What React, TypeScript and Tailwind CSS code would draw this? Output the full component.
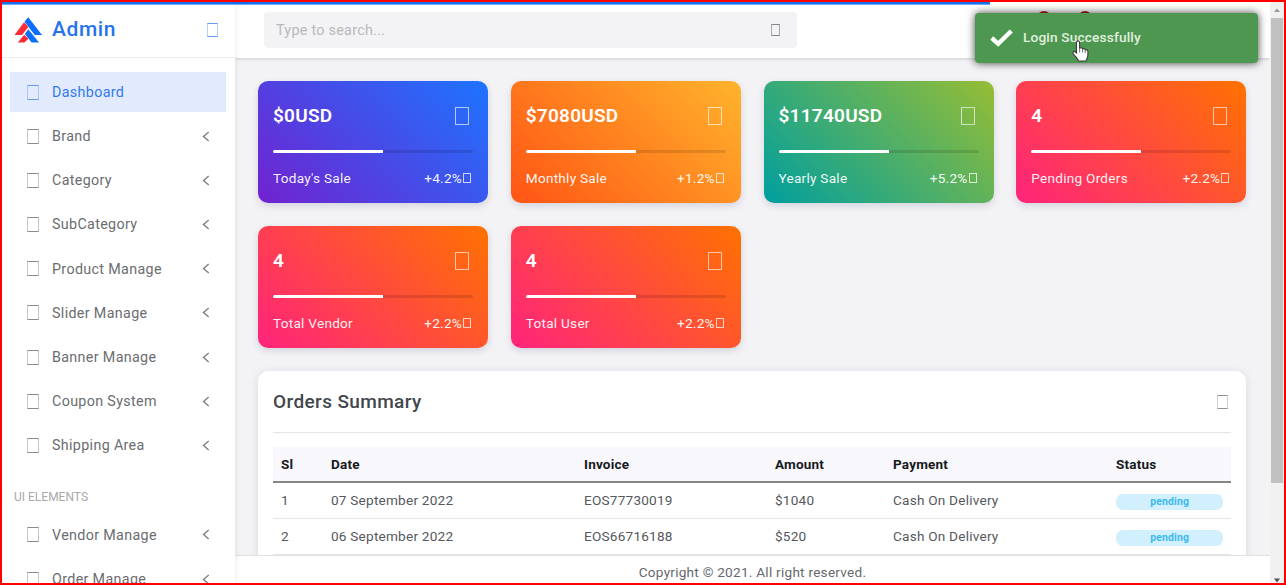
import React from "react";

type CardData = { value: string; label: string; change: string; tone: string };

const cards: CardData[] = [
  { value: "$0USD", label: "Today's Sale", change: "+4.2%", tone: "from-[#7122cf] to-[#1d74ff]" },
  { value: "$7080USD", label: "Monthly Sale", change: "+1.2%", tone: "from-[#ff5414] to-[#ffb42c]" },
  { value: "$11740USD", label: "Yearly Sale", change: "+5.2%", tone: "from-[#009f9f] to-[#96bd35]" },
  { value: "4", label: "Pending Orders", change: "+2.2%", tone: "from-[#ff237c] to-[#ff7200]" },
  { value: "4", label: "Total Vendor", change: "+2.2%", tone: "from-[#ff237c] to-[#ff7200]" },
  { value: "4", label: "Total User", change: "+2.2%", tone: "from-[#ff237c] to-[#ff7200]" },
];

const menu = ["Brand", "Category", "SubCategory", "Product Manage", "Slider Manage", "Banner Manage", "Coupon System", "Shipping Area"];
const uiMenu = ["Vendor Manage", "Order Manage"];

const orders = [
  { sl: "1", date: "07 September 2022", invoice: "EOS77730019", amount: "$1040" },
  { sl: "2", date: "06 September 2022", invoice: "EOS66716188", amount: "$520" },
];

function Logo() {
  return (
    <svg className="mt-[1px] ml-[12px] h-[26px] w-[29px]" viewBox="0 0 29 26">
      <path d="M10 5.2 14.3 10 8 18H0.5Z" fill="#fb2c33" />
      <path d="M10.2 17.8 14.4 21.8 10.4 25.5H3.8Z" fill="#fb2c33" />
      <path d="M14.3 0.3 28 18H20.8L10.4 4.8Z" fill="#0d6efd" />
      <path d="M14.3 12.2 25 25.5H17.6L10.9 17Z" fill="#0d6efd" />
    </svg>
  );
}

function Chevron() {
  return (
    <svg className="h-[11px] w-[8px] text-[#7d7f82]" viewBox="0 0 8 11" fill="none" stroke="currentColor" strokeWidth="1.4">
      <path d="M6.7 1 1.5 5.5 6.7 10" />
    </svg>
  );
}

function MenuItem({ label }: { label: string }) {
  return (
    <div className="flex h-[40px] shrink-0 items-center pl-[17px] pr-[16px] text-[14.3px] tracking-[0.34px] text-[#6b6d70]">
      <span className="h-[15px] w-[12px] border border-x-[#c6c6c8] border-y-[#8b8c8f]" />
      <span className="ml-[13px] flex-1 pt-[1px]">{label}</span>
      <Chevron />
    </div>
  );
}

function Sidebar() {
  return (
    <aside className="z-10 flex w-[233px] shrink-0 flex-col overflow-hidden bg-white shadow-[1px_0_6px_rgba(0,0,0,0.08)]">
      <div className="flex h-[56px] shrink-0 items-center border-b border-[#ebebeb]">
        <Logo />
        <span className="ml-[9px] flex-1 pb-[2px] text-[21px] font-medium leading-[26px] tracking-[0.6px] text-[#2674ec]">Admin</span>
        <span className="mr-[17px] h-[14px] w-[11px] border border-x-[#b5d0fa] border-y-[#639af3]" />
      </div>
      <nav className="flex flex-col gap-[4.2px] pl-[8px] pr-[9px] pt-[14px]">
        <div className="flex h-[40px] shrink-0 items-center bg-[#e2ebfd] pl-[17px] text-[14.3px] tracking-[0.34px] text-[#3479ed]">
          <span className="h-[15px] w-[12px] border border-x-[#a9c7f9] border-y-[#689df4]" />
          <span className="ml-[13px] pt-[1px]">Dashboard</span>
        </div>
        {menu.map((m) => (
          <MenuItem key={m} label={m} />
        ))}
        <div className="flex h-[41px] shrink-0 items-end pl-[4px] text-[12px] leading-[18px] text-[#a9a9ab]">
          <span className="pb-[5px]">UI ELEMENTS</span>
        </div>
        {uiMenu.map((m) => (
          <MenuItem key={m} label={m} />
        ))}
      </nav>
    </aside>
  );
}

function StatCard({ value, label, change, tone }: CardData) {
  return (
    <div className={`h-[122px] rounded-[10px] bg-linear-45/srgb px-[15px] text-white shadow-[0_3px_7px_rgba(100,100,130,0.22)] ${tone}`}>
      <div className="flex h-[69px] items-center">
        <span className="flex-1 text-[19px] font-semibold leading-[24px] tracking-[0.25px]">{value}</span>
        <span className="mr-[4px] h-[18px] w-[14px] border border-white/65" />
      </div>
      <div className="h-[3px] overflow-hidden rounded-full bg-black/12">
        <div className="h-full w-[55%] bg-white" />
      </div>
      <div className="flex h-[49px] items-center text-[13.6px] leading-[20px] tracking-[0.26px] text-white/95">
        <span className="flex-1">{label}</span>
        <span>{change}</span>
        <span className="mr-[2px] ml-[1px] mt-[1px] h-[10px] w-[8px] border border-white/75" />
      </div>
    </div>
  );
}

function Orders() {
  return (
    <section className="mt-[23px] h-[260px] rounded-[10px] bg-white px-[15px] shadow-[0_2px_8px_rgba(100,100,130,0.2)]">
      <div className="flex h-[62px] items-center border-b border-[#e4e5e7]">
        <h2 className="flex-1 text-[19px] font-medium leading-[24px] tracking-[0.38px] text-[#43474c]">Orders Summary</h2>
        <span className="mr-[3px] h-[14px] w-[11px] border border-x-[#d0d0d2] border-y-[#939496]" />
      </div>
      <table className="mt-[14px] w-full table-fixed border-collapse text-left text-[13.6px] tracking-[0.22px] text-[#55585c]">
        <colgroup>
          <col className="w-[50px]" />
          <col className="w-[253px]" />
          <col className="w-[191px]" />
          <col className="w-[118px]" />
          <col className="w-[223px]" />
          <col />
        </colgroup>
        <thead>
          <tr className="h-[35px] border-b-2 border-[#858585] bg-[#f8f8fc] text-[13.5px] text-[#17191c]">
            {["Sl", "Date", "Invoice", "Amount", "Payment", "Status"].map((h) => (
              <th key={h} className="px-[8px] pb-0 pt-[1px] font-bold tracking-[0.2px]">{h}</th>
            ))}
          </tr>
        </thead>
        <tbody>
          {orders.map((o) => (
            <tr key={o.sl} className="h-[36px] border-b border-[#e4e5e7]">
              <td className="px-[8px] py-0">{o.sl}</td>
              <td className="px-[8px] py-0">{o.date}</td>
              <td className="px-[8px] py-0">{o.invoice}</td>
              <td className="px-[8px] py-0">{o.amount}</td>
              <td className="px-[8px] py-0">Cash On Delivery</td>
              <td className="px-[8px] pt-[3px] pb-0">
                <div className="flex h-[16px] items-center justify-center rounded-[7px] bg-[#d1effc] text-[10.4px] font-bold tracking-[0.15px] text-[#3bb9ee]">pending</div>
              </td>
            </tr>
          ))}
        </tbody>
      </table>
    </section>
  );
}

function Toast() {
  return (
    <div className="absolute left-[973px] top-[11px] z-30 flex h-[50px] w-[283px] items-center rounded-[4px] bg-[#4e9751] pl-[15px] shadow-[0_0_9px_rgba(0,0,0,0.75)]">
      <svg className="h-[18px] w-[23px]" viewBox="0 0 23 18" fill="none" stroke="white" strokeWidth="4.4">
        <path d="M1.7 9 8.2 14.8 21.3 2" />
      </svg>
      <span className="ml-[10px] pb-[2px] text-[13.7px] font-medium tracking-[0.15px] text-[#e0efdf]">Login Successfully</span>
    </div>
  );
}

function Cursor() {
  return (
    <svg className="absolute left-[1070px] top-[38px] z-40 h-[22px] w-[17px]" viewBox="0 0 17 22">
      <path
        d="M4.5 2.6C4.5 0.4 7.6 0.4 7.6 2.6V8.2C9 7.3 10.3 7.8 10.5 8.9C11.9 8.2 13 8.8 13.2 9.9C14.7 9.3 15.9 10.2 15.9 11.8V15C15.9 18 14.5 18.7 14 21H6.5C6 18.6 3 16.4 1.3 13.8C0.2 12 2 10.6 3.4 12L4.5 13.2Z"
        fill="white"
        stroke="#3b3b3b"
        strokeWidth="1.1"
        strokeLinejoin="round"
      />
      <path d="M7.6 8.2v4.2M10.5 9v3.6M13.2 10v3" stroke="#555" strokeWidth="0.8" />
    </svg>
  );
}

export default function App() {
  return (
    <div className="relative flex h-[585px] w-[1286px] overflow-hidden border-2 border-[#ff0000] bg-[#f3f3f6] font-[Roboto,sans-serif]">
      <Sidebar />
      <div className="flex min-w-0 flex-1 flex-col">
        <header className="flex h-[56px] shrink-0 items-center bg-white pl-[29px] shadow-[0_1px_3px_rgba(0,0,0,0.16)]">
          <div className="flex h-[36px] w-[533px] items-center rounded-[4px] bg-[#f3f3f5] pl-[12px] pr-[17px]">
            <span className="flex-1 pt-[1px] text-[14.4px] tracking-[0.25px] text-[#b9b9bb]">Type to search...</span>
            <span className="h-[12px] w-[9px] border border-x-[#aaaaac] border-y-[#858587]" />
          </div>
          <div className="ml-[240px] flex gap-[27px] self-start pt-[9px]">
            <span className="h-[14px] w-[14px] rounded-full bg-[#b52414]" />
            <span className="h-[14px] w-[14px] rounded-full bg-[#b52414]" />
          </div>
        </header>
        <main className="min-h-0 flex-1 overflow-hidden pl-[23px] pr-[23.7px] pt-[23px]">
          <div className="grid grid-cols-4 gap-x-[22.7px] gap-y-[23px]">
            {cards.map((c) => (
              <StatCard key={c.label} {...c} />
            ))}
          </div>
          <Orders />
        </main>
        <footer className="z-[5] flex h-[28px] shrink-0 items-start justify-center border-t border-[#e1e1e4] bg-white pt-[6px] text-[13.6px] leading-[21px] tracking-[0.25px] text-[#65686c]">
          Copyright © 2021. All right reserved.
        </footer>
      </div>
      <div className="flex w-[14px] shrink-0 flex-col items-center bg-[#f1f1f1]">
        <svg className="h-[16px] w-[8px] shrink-0" viewBox="0 0 8 16"><path d="M1 10 4 6.5 7 10Z" fill="#999" /></svg>
        <div className="h-[465px] w-[12px] shrink-0 bg-[#c1c1c1]" />
        <div className="flex-1" />
        <svg className="h-[5px] w-[8px] shrink-0" viewBox="0 0 8 5"><path d="M1 0.5 4 4.5 7 0.5Z" fill="#505050" /></svg>
      </div>
      <div className="absolute left-0 top-0 z-20 h-[3px] w-[988px] border-b border-[#6cabff] bg-[#1b6fe8]" />
      <Toast />
      <Cursor />
    </div>
  );
}
